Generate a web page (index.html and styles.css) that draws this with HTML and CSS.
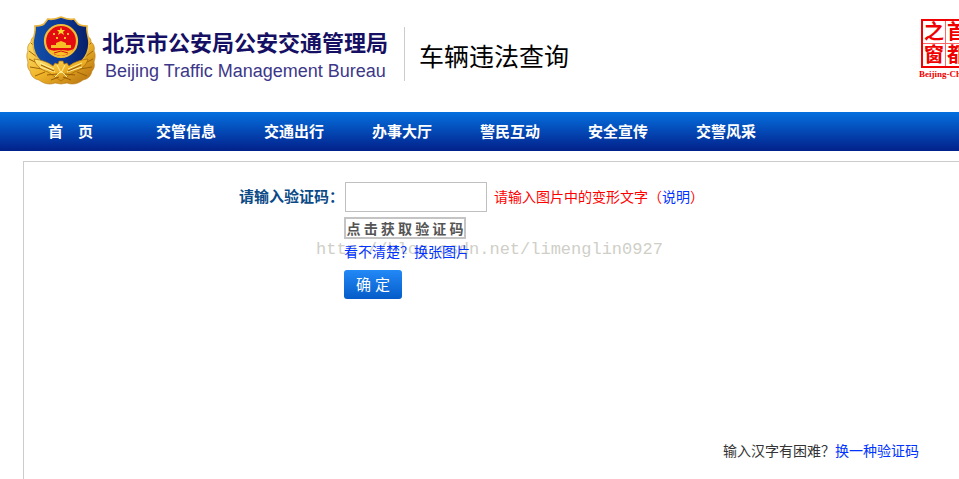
FILE: index.html
```html
<!DOCTYPE html>
<html lang="zh-CN">
<head>
<meta charset="utf-8">
<title>车辆违法查询</title>
<link rel="stylesheet" href="styles.css">
</head>
<body>
<header class="header">
  <svg class="emblem" viewBox="0 0 70 70" aria-hidden="true">
    <defs>
      <linearGradient id="gold" x1="0" y1="0" x2="1" y2="1">
        <stop offset="0" stop-color="#ffe678"/>
        <stop offset=".5" stop-color="#f0b428"/>
        <stop offset="1" stop-color="#b06c0c"/>
      </linearGradient>
      <linearGradient id="shield" x1="0" y1="0" x2="1" y2="0">
        <stop offset="0" stop-color="#1450a8"/>
        <stop offset=".5" stop-color="#0c3a96"/>
        <stop offset="1" stop-color="#081f66"/>
      </linearGradient>
    </defs>
    <path d="M9 21c-3 0-4 2-4 5-3 2-4 6-3 9-2 4-1 8 0 11-1 4 0 7 2 9 1 5 4 8 9 9 5 4 11 5 16 3l6 1 6-1c5 2 11 1 16-3 5-1 8-4 9-9 2-2 3-5 2-9 1-3 2-7 0-11 1-3 0-7-3-9 0-3-1-5-4-5z" fill="url(#gold)" stroke="#b87810" stroke-width=".6"/>
    <path d="M5 27l6 6M3 35l8 6M3 43l10 5M4 51l12 2M9 60l10-4M65 27l-6 6M67 35l-8 6M67 43l-10 5M66 51l-12 2M61 60l-10-4" stroke="#9c620a" stroke-width="1" fill="none"/>
    <path d="M35 1c5 2 9 3 13 2l4 5c3 2 6 2 9 2-1 6 2 11 2 17 0 15-11 24-28 31C18 51 7 42 7 27c0-6 3-11 2-17 3 0 6 0 9-2l4-5c4 1 8 0 13-2z" fill="url(#shield)" stroke="#e8b43c" stroke-width="1.6"/>
    <circle cx="35" cy="25" r="16" fill="#e30a10" stroke="#f2bc38" stroke-width="2.2"/>
    <path d="M35 11l1 3h3l-2 2 1 3-3-2-3 2 1-3-2-2h3z" fill="#ffd62c"/>
    <path d="M27 17h2v2h-2zM41 17h2v2h-2zM30 21h2v2h-2zM38 21h2v2h-2zM30 27l5-2 5 2v2h5v3H25v-3h5z" fill="#f8be25"/>
    <path d="M23 33c4 3 8 1 12 1s8 2 12-1l-2 4-6 2-4 1-4-1-6-2z" fill="#f8be25"/>
    <path d="M28 37l7-2 7 2" fill="none" stroke="#d80c10" stroke-width="1"/>
    <path d="M8 43c8 1 14 3 19 7l2-3 3 1 1-3h4l1 3 3-1 2 3c5-4 11-6 19-7-2 7-7 11-14 13l-13 9-13-9c-7-2-12-6-14-13z" fill="url(#gold)" stroke="#a66908" stroke-width=".7"/>
    <path d="M14 47l14 6M14 51l15 5M56 47l-14 6M56 51l-15 5M31 49l4 8 4-8M29 61l6-6 6 6" stroke="#fff0a0" stroke-width="1" fill="none"/>
    <path d="M15 49l13 6M55 49l-13 6M21 59l10-1M49 59l-10-1M25 64l8-3M45 64l-8-3" stroke="#985b04" stroke-width="1"/>
  </svg>
  <div class="bureau">
    <div class="bureau-cn">北京市公安局公安交通管理局</div>
    <div class="bureau-en" lang="en">Beijing Traffic Management Bureau</div>
  </div>
  <h1 class="title">车辆违法查询</h1>
  <a class="seal" href="#">
    <span class="seal-grid"><span>之</span><span>首</span><span>窗</span><span>都</span></span>
    <span class="seal-name">Beijing-China</span>
  </a>
</header>
<nav class="nav">
  <a href="#">首　页</a>
  <a href="#">交管信息</a>
  <a href="#">交通出行</a>
  <a href="#">办事大厅</a>
  <a href="#">警民互动</a>
  <a href="#">安全宣传</a>
  <a href="#">交警风采</a>
</nav>
<main class="panel">
  <form class="form">
    <label class="label" for="code">请输入验证码：</label>
    <div class="row">
      <input class="code" id="code" type="text">
      <span class="hint">请输入图片中的变形文字（<a href="#">说明</a>）</span>
    </div>
    <button class="captcha" type="button">点 击 获 取 验 证 码</button>
    <a class="refresh" href="#">看不清楚？换张图片</a>
    <button class="submit" type="submit">确 定</button>
    <span class="watermark">http://blog.csdn.net/limenglin0927</span>
  </form>
  <p class="help">输入汉字有困难？<a href="#">换一种验证码</a></p>
</main>
</body>
</html>
```

FILE: styles.css
```css
* {
  box-sizing: border-box;
}

body {
  display: flex;
  flex-direction: column;
  min-height: 100vh;
  margin: 0;
  overflow-x: hidden;
  background: #fff;
  color: #333;
  font: 14px/20px "Liberation Sans", "Noto Sans CJK SC", sans-serif;
}

a {
  color: #03f;
  text-decoration: none;
}

.header {
  display: flex;
  align-items: flex-start;
  height: 112px;
  padding: 16px 0 0 26px;
}

.emblem {
  flex: none;
  width: 70px;
  height: 70px;
}

.bureau {
  flex: none;
  margin: 13px 0 0 6px;
  padding-right: 16px;
  white-space: nowrap;
}

.bureau-cn {
  color: #151064;
  font-size: 22px;
  font-weight: 700;
  line-height: 30px;
}

.bureau-en {
  padding-left: 3px;
  color: #3c3789;
  font-size: 18px;
  line-height: 24px;
}

.title {
  flex: none;
  margin: 11px 0 0;
  padding: 6px 0 0 14px;
  border-left: 1px solid #ccc;
  color: #000;
  font-size: 25px;
  font-weight: 400;
  line-height: 48px;
}

.seal {
  flex: none;
  margin: 3px -14px 0 auto;
  color: #f00000;
}

.seal-grid {
  display: grid;
  grid-template-columns: 22px 22px;
  gap: 1px;
  width: 49px;
  margin-left: 2px;
  border: 2px solid #f00000;
  background: #f66;
  font-size: 20px;
  font-weight: 700;
  line-height: 22px;
  text-align: center;
}

.seal-grid span {
  background: #fff;
}

.seal-name {
  display: block;
  font: 700 9px/12px "Liberation Serif", serif;
}

.nav {
  display: grid;
  grid-template-columns: repeat(7, 108px);
  padding-left: 48px;
  background: linear-gradient(#0570df, #03208a);
}

.nav a {
  color: #fff;
  font-size: 15px;
  font-weight: 700;
  line-height: 39px;
}

.panel {
  flex: 1;
  display: flex;
  flex-direction: column;
  justify-content: space-between;
  margin: 10px 0 0 23px;
  padding: 20px 40px 18px 0;
  border: 1px solid #ccc;
  border-width: 1px 0 0 1px;
}

.form {
  position: relative;
  isolation: isolate;
  display: grid;
  grid-template-columns: 320px 1fr;
  justify-items: start;
}

.form > * {
  grid-column: 2;
}

.form > .label {
  grid-column: 1;
  justify-self: end;
  color: #0b4a86;
  font-size: 15px;
  font-weight: 700;
  line-height: 30px;
}

.row {
  display: flex;
  align-items: center;
  gap: 7px;
  padding-left: 1px;
}

.code {
  width: 142px;
  height: 30px;
  padding: 0 6px;
  border: 1px solid #c0c0c0;
  font: inherit;
}

.hint {
  color: #f00;
}

.captcha {
  width: 122px;
  height: 22px;
  margin-top: 5px;
  padding: 0;
  border: 2px solid #c4c4c4;
  background: #fff;
  color: #555;
  font: 700 14px/16px "Noto Sans CJK SC", sans-serif;
}

.refresh {
  margin-top: 3px;
}

.submit {
  width: 58px;
  height: 29px;
  margin-top: 8px;
  padding: 0;
  border: 0;
  border-radius: 3px;
  background: linear-gradient(#2289f7, #055cc8);
  color: #fff;
  font: 15px/28px "Liberation Sans", "Noto Sans CJK SC", sans-serif;
}

.form > .watermark {
  position: absolute;
  z-index: -1;
  top: 58px;
  left: 292px;
  grid-column: 1 / -1;
  color: #cfcfc8;
  font: 17px/20px "Liberation Mono", monospace;
}

.help {
  margin: 0;
  text-align: right;
}
```
